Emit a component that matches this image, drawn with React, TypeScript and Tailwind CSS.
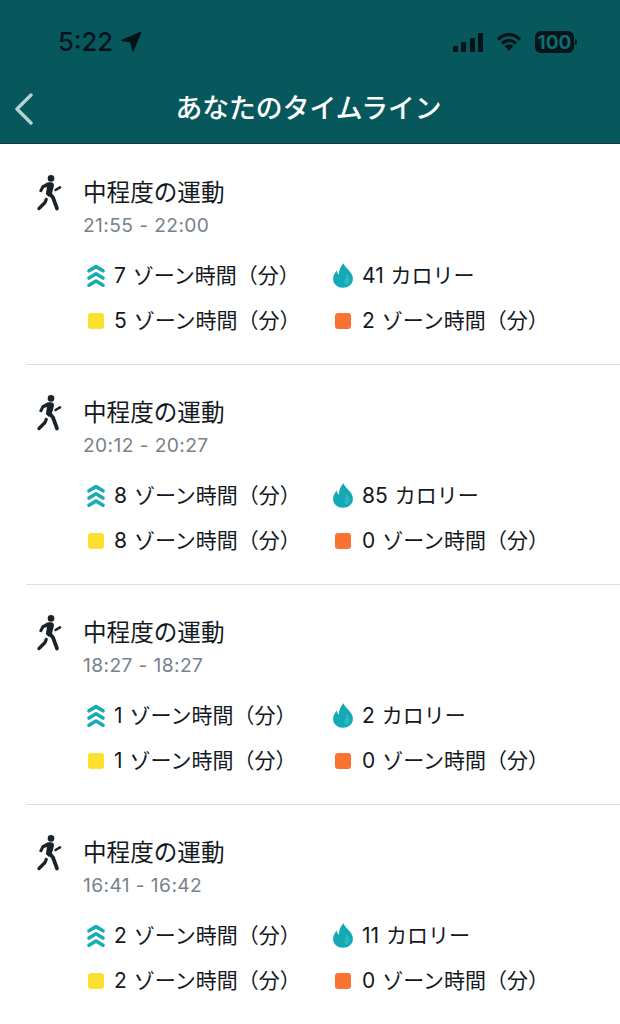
import React from 'react';

const jp = { fontFamily: '"Inter", "Noto Sans CJK JP", sans-serif' };

interface Entry {
  time: string;
  zone: number;
  calories: number;
  fat: number;
  cardio: number;
}

const entries: Entry[] = [
  { time: '21:55 - 22:00', zone: 7, calories: 41, fat: 5, cardio: 2 },
  { time: '20:12 - 20:27', zone: 8, calories: 85, fat: 8, cardio: 0 },
  { time: '18:27 - 18:27', zone: 1, calories: 2, fat: 1, cardio: 0 },
  { time: '16:41 - 16:42', zone: 2, calories: 11, fat: 2, cardio: 0 },
];

function Walker() {
  return (
    <svg width="26" height="36" viewBox="0 0 26 36" fill="none">
      <circle cx="15" cy="3.4" r="3.3" fill="#1a2329" />
      <path d="M9.5 8.5 C11 7.2 14 7 16 7.6 C17.8 8.2 18.3 9.8 17.8 11.5 L15.8 19 L13 22 L9.8 19 L11 12 L8 13 L5.6 17.5 L3 16.2 L5.5 11 C6 10 8 9.4 9.5 8.5 Z" fill="#1a2329" />
      <path d="M13.2 18 L17 22.5 L21 33.5" stroke="#1a2329" strokeWidth="3.7" strokeLinecap="round" strokeLinejoin="round" />
      <path d="M10.2 24.5 L9 27.5 L3 33.5" stroke="#1a2329" strokeWidth="3.3" strokeLinecap="round" strokeLinejoin="round" />
      <path d="M19.6 15 L24 12.4" stroke="#1a2329" strokeWidth="2.6" strokeLinecap="round" />
    </svg>
  );
}

function ZoneChevrons() {
  return (
    <svg width="18" height="24" viewBox="0 0 18 24" fill="none">
      <path
        d="M2 6.8 L9 2.6 L16 6.8 M2 14 L9 9.8 L16 14 M2 21.2 L9 17 L16 21.2"
        stroke="#19abb5"
        strokeWidth="3.6"
        strokeLinecap="round"
        strokeLinejoin="round"
      />
    </svg>
  );
}

function Flame() {
  return (
    <svg width="21" height="25" viewBox="0 0 20 25">
      <path
        fill="#13a9b5"
        d="M10.5 0.3 C11.5 3.5 14.5 5.5 17 8.8 C18.9 11.2 19.9 13.5 19.9 16 C19.9 21 15.5 24.8 10 24.8 C4.5 24.8 0.1 21 0.1 16 C0.1 12.8 1.6 10 3.8 7.6 C4 9.6 4.8 11 6 11.6 C5.8 7.5 7.4 3.4 10.5 0.3 Z"
      />
      <path
        fill="#2db7c1"
        d="M13 10.5 C13.3 13 11.8 15.5 11.4 18 C11.1 20.3 12 21.8 13.4 21.5 C15.6 21 16.9 19 16.6 16.6 C16.3 14.4 14.4 12.2 13 10.5 Z"
      />
    </svg>
  );
}

function Stat({ icon, text, gap = 'ml-[8px]' }: { icon: React.ReactNode; text: string; gap?: string }) {
  return (
    <div className="flex items-center h-[45px]">
      <div className="w-[20px] flex justify-center">{icon}</div>
      <span className={`${gap} text-[21px] [word-spacing:1px] text-[#14191e] whitespace-nowrap leading-none`}>{text}</span>
    </div>
  );
}

function Activity({ entry, first }: { entry: Entry; first: boolean }) {
  return (
    <div className={`h-[220px] ml-[26px] border-t flex ${first ? 'border-transparent' : 'border-[#dddfe0]'}`}>
      <div className="w-[58px] pt-[30px] pl-[10px]">
        <Walker />
      </div>
      <div className="pt-[33px] -ml-[1px]">
        <div className="text-[23.6px] leading-[30px] text-[#14191e]">中程度の運動</div>
        <div className="text-[19.2px] leading-[26px] mt-[4px] text-[#78828b] tracking-[0.4px]">{entry.time}</div>
        <div className="grid grid-cols-[247px_1fr] mt-[15px] ml-[3px]">
          <Stat icon={<ZoneChevrons />} text={`${entry.zone} ゾーン時間（分）`} />
          <Stat icon={<Flame />} gap="ml-[9px]" text={`${entry.calories} カロリー`} />
          <Stat
            icon={<span className="block size-[16px] rounded-[3px] bg-[#fde02f]" />}
            text={`${entry.fat} ゾーン時間（分）`}
          />
          <Stat
            icon={<span className="block size-[16px] rounded-[3px] bg-[#fb7330]" />}
            gap="ml-[9px]"
            text={`${entry.cardio} ゾーン時間（分）`}
          />
        </div>
      </div>
    </div>
  );
}

export default function App() {
  return (
    <div className="w-[620px] h-[1024px] overflow-hidden bg-white" style={jp}>
      <header className="h-[144px] bg-[#07585d] border-b border-[#0b3a40] flex flex-col">
        <div className="flex items-center justify-between h-[82px] pl-[58px] pr-[43px] pt-[2px]">
          <div className="flex items-center gap-[7px]">
            <span className="text-[25.6px] leading-none font-medium text-[#06141a]">5:22</span>
            <svg width="22" height="22" viewBox="0 0 22 22">
              <path d="M21 1 L1 9.5 L10.5 11 L13 20.5 Z" fill="#06141a" stroke="#06141a" strokeWidth="1" strokeLinejoin="round" />
            </svg>
          </div>
          <div className="flex items-center gap-[13px]">
            <div className="flex items-end gap-[3.3px] h-[19px]">
              <span className="block w-[5px] h-[6px] rounded-[1px] bg-[#06141a]" />
              <span className="block w-[5px] h-[10px] rounded-[1px] bg-[#06141a]" />
              <span className="block w-[5px] h-[14px] rounded-[1px] bg-[#06141a]" />
              <span className="block w-[5px] h-[19px] rounded-[1px] bg-[#06141a]" />
            </div>
            <svg width="26" height="20" viewBox="0 0 26 20" fill="none">
              <path d="M2 7.5 C8.5 1 17.5 1 24 7.5 M6 11.5 C10 7.5 16 7.5 20 11.5" stroke="#06141a" strokeWidth="3.2" />
              <path d="M8.7 14 C11 12 15 12 17.3 14 L13 19 Z" fill="#06141a" />
            </svg>
            <div className="flex items-center">
              <div className="w-[39px] h-[22px] rounded-[6px] bg-[#06141a] flex items-center justify-center text-[#0f6d73] text-[19px] font-bold leading-none">
                100
              </div>
              <span className="block w-[2px] h-[6px] ml-[1px] rounded-r-[2px] bg-[#06141a]" />
            </div>
          </div>
        </div>
        <div className="relative h-[52px] flex items-center justify-center pr-[3px] pt-[1px]">
          <svg className="absolute left-[14px] top-[11px]" width="20" height="32" viewBox="0 0 20 32" fill="none">
            <path d="M17 2 L3 16 L17 30" stroke="#b5d3d3" strokeWidth="3.4" strokeLinecap="round" strokeLinejoin="round" />
          </svg>
          <h1 className="text-[26.8px] leading-none font-medium text-white">あなたのタイムライン</h1>
        </div>
      </header>
      {entries.map((e, i) => (
        <Activity key={e.time} entry={e} first={i === 0} />
      ))}
    </div>
  );
}
